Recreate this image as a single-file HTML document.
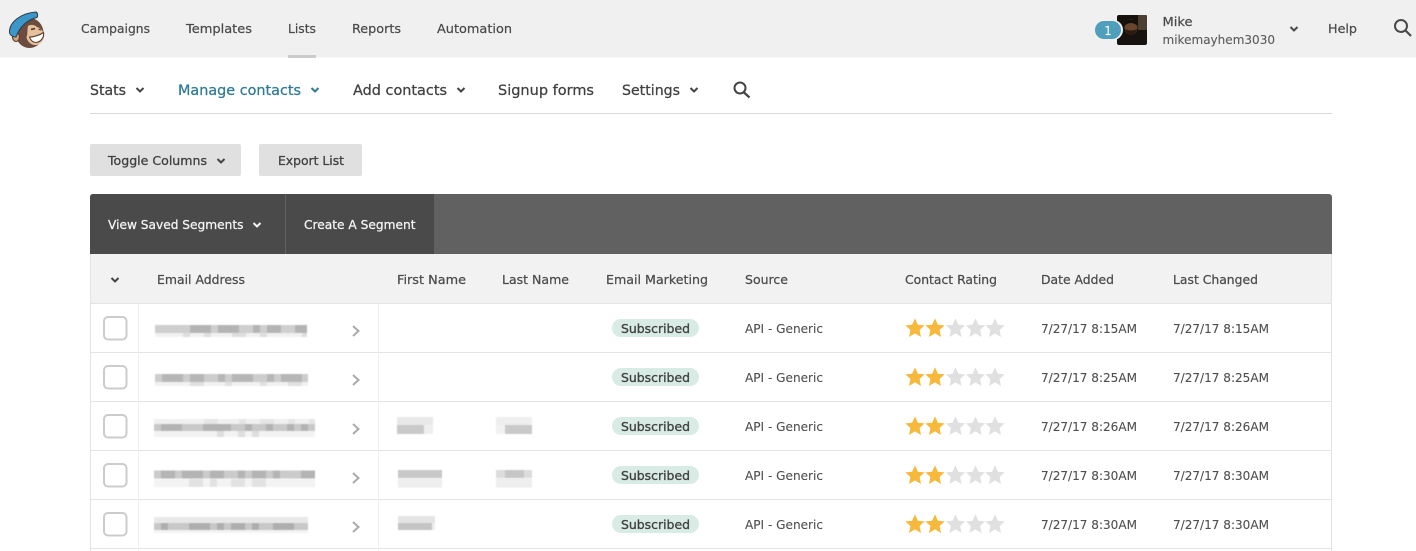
<!DOCTYPE html>
<html><head><meta charset="utf-8"><title>Lists</title>
<style>
html,body{margin:0;padding:0;background:#fff;width:1416px;height:551px;overflow:hidden}
svg{display:block}
text{font-family:"DejaVu Sans","Liberation Sans",sans-serif;fill:#4a4a4a}
.n{font-size:12.5px;fill:#4a4a4a;stroke:#4a4a4a;stroke-width:.22}
.s{font-size:14.5px;fill:#404040;stroke:#404040;stroke-width:.25}
.m{font-size:14.5px;fill:#2f7a94;stroke:#2f7a94;stroke-width:.25}
.b{font-size:12px;fill:#404040;stroke:#404040;stroke-width:.28}
.w{font-size:12px;fill:#f5f5f5;stroke:#f5f5f5;stroke-width:.25}
.h{font-size:12px;fill:#4a4a4a;stroke:#4a4a4a;stroke-width:.22}
.c{font-size:12px;fill:#4f4f4f;stroke:#4f4f4f;stroke-width:.1}
.p{font-size:12px;fill:#404040;stroke:#404040;stroke-width:.3}
.chev{fill:none;stroke-width:2;stroke-linecap:butt}
</style></head><body>
<svg xmlns="http://www.w3.org/2000/svg" width="1416" height="551" viewBox="0 0 1416 551">
<defs>
<filter id="soft" x="-5%" y="-5%" width="110%" height="110%"><feGaussianBlur stdDeviation="0.6"/></filter>
<path id="ch" class="chev" d="M-3.500 -2L0 1.500L3.500 -2"/>
<path id="st" d="M0 -9.6L2.9 -3.2L9.6 -2.6L4.6 2L6 9L0 5.4L-6 9L-4.6 2L-9.6 -2.6L-2.9 -3.2Z"/>
<g id="row">
<rect x="104" y="317" width="22.500" height="22.500" rx="4" fill="#fff" stroke="#ccc" stroke-width="2"/>
<path d="M353 326L358.500 331L353 336" fill="none" stroke="#aaa" stroke-width="2"/>
<rect x="612" y="319" width="87" height="18" rx="9" fill="#d8ebe4"/>
<use href="#st" x="915" y="328" fill="#f6b93b"/><use href="#st" x="935" y="328" fill="#f6b93b"/><use href="#st" x="955.500" y="328" fill="#e0e0e0"/><use href="#st" x="975.500" y="328" fill="#e0e0e0"/><use href="#st" x="995" y="328" fill="#e0e0e0"/>
</g>
</defs>

<!-- top bar -->
<rect width="1416" height="57.500" fill="#f0f0f0"/>
<rect x="288" y="55" width="28" height="3" fill="#ccc"/>

<!-- logo -->
<g>
<ellipse cx="29.500" cy="33" rx="14" ry="15" fill="#6b4c3e"/>
<ellipse cx="16" cy="37" rx="3.500" ry="4.500" fill="#d3a47a" stroke="#5c4034" stroke-width="1.200"/>
<path d="M9.500 31C10 22 21 13 36 12C38 13 38 16 37 17.500C28 19.500 20 26 16 37C12 37 9 34.500 9.500 31Z" fill="#3b97c9" stroke="#2f3a44" stroke-width="1"/>
<path d="M28 26C31 24 35 25 37 27C41 28 44.500 32 44 37C43.500 42 39 45.500 34 45C30 44 27 41 26.500 37C28 34 27 30 28 26Z" fill="#e6c29c"/>
<path d="M29.500 37C34 37 40 35 43.500 32.500C44.500 37 41 42 36 42.500C32.500 42.500 30.500 40 29.500 37Z" fill="#fff" stroke="#5c3d30" stroke-width="1.100"/>
<path d="M31 29.500L35 28.500" stroke="#4a3228" stroke-width="1.500"/>
<path d="M38.500 29L41 30" stroke="#4a3228" stroke-width="1.200"/>
</g>

<text class="n" x="81" y="33" textLength="69" lengthAdjust="spacingAndGlyphs">Campaigns</text>
<text class="n" x="186" y="33" textLength="66" lengthAdjust="spacingAndGlyphs">Templates</text>
<text class="n" x="288" y="33" textLength="28" lengthAdjust="spacingAndGlyphs">Lists</text>
<text class="n" x="352" y="33" textLength="49" lengthAdjust="spacingAndGlyphs">Reports</text>
<text class="n" x="437" y="33" textLength="75" lengthAdjust="spacingAndGlyphs">Automation</text>

<!-- avatar & badge -->
<rect x="1117" y="15" width="30" height="30" rx="2" fill="#17120e"/>
<rect x="1138" y="15" width="9" height="15" rx="1" fill="#4a3f30"/>
<ellipse cx="1131" cy="27" rx="6.500" ry="8" fill="#6a452c"/>
<path d="M1125 29C1127 37 1135 37 1137 29C1134 31 1128 31 1125 29Z" fill="#2a1a10"/>
<path d="M1124.500 26C1124 17 1138 17 1137.500 26C1134 22 1128 22 1124.500 26Z" fill="#15100c"/>
<rect x="1095" y="20" width="28" height="20" rx="10" fill="#f0f0f0"/>
<rect x="1095" y="21" width="26" height="18" rx="9" fill="#4f9ebb"/>
<text x="1104.500" y="35" style="font-size:12px;fill:#f2f7f9;stroke:#f2f7f9;stroke-width:.25" textLength="7" lengthAdjust="spacingAndGlyphs">1</text>

<text class="n" x="1162.500" y="26" textLength="30" lengthAdjust="spacingAndGlyphs">Mike</text>
<text class="n" x="1162.500" y="44" textLength="112.500" lengthAdjust="spacingAndGlyphs" style="fill:#5c5c5c;stroke-width:.1">mikemayhem3030</text>
<use href="#ch" x="1294" y="29" stroke="#4a4a4a"/>
<text class="n" x="1328" y="33" textLength="29" lengthAdjust="spacingAndGlyphs">Help</text>
<circle cx="1401" cy="26" r="6" fill="none" stroke="#4a4a4a" stroke-width="2"/>
<path d="M1405.500 30.500L1411 36" stroke="#4a4a4a" stroke-width="2.200"/>

<!-- sub nav -->
<text class="s" x="90" y="95" textLength="36" lengthAdjust="spacingAndGlyphs">Stats</text>
<use href="#ch" x="140" y="90" stroke="#444"/>
<text class="m" x="178" y="95" textLength="123" lengthAdjust="spacingAndGlyphs">Manage contacts</text>
<use href="#ch" x="315" y="90" stroke="#2f7a94"/>
<text class="s" x="353" y="95" textLength="94" lengthAdjust="spacingAndGlyphs">Add contacts</text>
<use href="#ch" x="461" y="90" stroke="#444"/>
<text class="s" x="498" y="95" textLength="96" lengthAdjust="spacingAndGlyphs">Signup forms</text>
<text class="s" x="622" y="95" textLength="58" lengthAdjust="spacingAndGlyphs">Settings</text>
<use href="#ch" x="694" y="90" stroke="#444"/>
<circle cx="740" cy="88" r="5.500" fill="none" stroke="#444" stroke-width="2"/>
<path d="M744 92.500L749.500 97.500" stroke="#444" stroke-width="2.200"/>
<rect x="90" y="113" width="1242" height="1" fill="#d9d9d9"/>

<!-- buttons -->
<rect x="90" y="144" width="151" height="32" rx="2" fill="#e0e0e0"/>
<text class="b" x="108" y="165" textLength="99" lengthAdjust="spacingAndGlyphs">Toggle Columns</text>
<use href="#ch" x="221" y="161" stroke="#444"/>
<rect x="259" y="144" width="103" height="32" rx="2" fill="#e0e0e0"/>
<text class="b" x="278" y="165" textLength="66" lengthAdjust="spacingAndGlyphs">Export List</text>

<!-- segments bar -->
<path d="M90 197a3 3 0 0 1 3-3H1329a3 3 0 0 1 3 3V254H90Z" fill="#616161"/>
<path d="M90 197a3 3 0 0 1 3-3H434V254H90Z" fill="#4a4a4a"/>
<rect x="285" y="194" width="1" height="60" fill="#626262"/>
<text class="w" x="108" y="229" textLength="135.500" lengthAdjust="spacingAndGlyphs">View Saved Segments</text>
<use href="#ch" x="257" y="225" stroke="#f2f2f2"/>
<text class="w" x="304" y="229" textLength="111.500" lengthAdjust="spacingAndGlyphs">Create A Segment</text>

<!-- table -->
<rect x="90" y="254" width="1242" height="49" fill="#f2f2f2"/>
<g fill="#e3e3e3">
<rect x="90" y="254" width="1" height="297"/>
<rect x="1331" y="254" width="1" height="297"/>
<rect x="90" y="303" width="1242" height="1"/>
<rect x="90" y="352" width="1242" height="1"/>
<rect x="90" y="401" width="1242" height="1"/>
<rect x="90" y="450" width="1242" height="1"/>
<rect x="90" y="499" width="1242" height="1"/>
<rect x="90" y="548" width="1242" height="1"/>
</g>
<g fill="#efefef"><rect x="138" y="304" width="1" height="247"/><rect x="378" y="304" width="1" height="247"/></g>

<use href="#ch" x="115" y="280" stroke="#444"/>
<text class="h" x="157" y="284" textLength="88" lengthAdjust="spacingAndGlyphs">Email Address</text>
<text class="h" x="397" y="284" textLength="69" lengthAdjust="spacingAndGlyphs">First Name</text>
<text class="h" x="502" y="284" textLength="67" lengthAdjust="spacingAndGlyphs">Last Name</text>
<text class="h" x="606" y="284" textLength="102" lengthAdjust="spacingAndGlyphs">Email Marketing</text>
<text class="h" x="745" y="284" textLength="43" lengthAdjust="spacingAndGlyphs">Source</text>
<text class="h" x="905" y="284" textLength="92" lengthAdjust="spacingAndGlyphs">Contact Rating</text>
<text class="h" x="1041" y="284" textLength="73" lengthAdjust="spacingAndGlyphs">Date Added</text>
<text class="h" x="1173" y="284" textLength="85" lengthAdjust="spacingAndGlyphs">Last Changed</text>

<use href="#row"/><use href="#row" y="49"/><use href="#row" y="98"/><use href="#row" y="147"/><use href="#row" y="196"/>

<!-- row text -->
<g>
<text class="p" x="621" y="333" textLength="69" lengthAdjust="spacingAndGlyphs">Subscribed</text>
<text class="c" x="745" y="333" textLength="78" lengthAdjust="spacingAndGlyphs">API - Generic</text>
<text class="c" x="1041" y="333" textLength="96" lengthAdjust="spacingAndGlyphs">7/27/17 8:15AM</text>
<text class="c" x="1173" y="333" textLength="96" lengthAdjust="spacingAndGlyphs">7/27/17 8:15AM</text>
<text class="p" x="621" y="382" textLength="69" lengthAdjust="spacingAndGlyphs">Subscribed</text>
<text class="c" x="745" y="382" textLength="78" lengthAdjust="spacingAndGlyphs">API - Generic</text>
<text class="c" x="1041" y="382" textLength="96" lengthAdjust="spacingAndGlyphs">7/27/17 8:25AM</text>
<text class="c" x="1173" y="382" textLength="96" lengthAdjust="spacingAndGlyphs">7/27/17 8:25AM</text>
<text class="p" x="621" y="431" textLength="69" lengthAdjust="spacingAndGlyphs">Subscribed</text>
<text class="c" x="745" y="431" textLength="78" lengthAdjust="spacingAndGlyphs">API - Generic</text>
<text class="c" x="1041" y="431" textLength="96" lengthAdjust="spacingAndGlyphs">7/27/17 8:26AM</text>
<text class="c" x="1173" y="431" textLength="96" lengthAdjust="spacingAndGlyphs">7/27/17 8:26AM</text>
<text class="p" x="621" y="480" textLength="69" lengthAdjust="spacingAndGlyphs">Subscribed</text>
<text class="c" x="745" y="480" textLength="78" lengthAdjust="spacingAndGlyphs">API - Generic</text>
<text class="c" x="1041" y="480" textLength="96" lengthAdjust="spacingAndGlyphs">7/27/17 8:30AM</text>
<text class="c" x="1173" y="480" textLength="96" lengthAdjust="spacingAndGlyphs">7/27/17 8:30AM</text>
<text class="p" x="621" y="529" textLength="69" lengthAdjust="spacingAndGlyphs">Subscribed</text>
<text class="c" x="745" y="529" textLength="78" lengthAdjust="spacingAndGlyphs">API - Generic</text>
<text class="c" x="1041" y="529" textLength="96" lengthAdjust="spacingAndGlyphs">7/27/17 8:30AM</text>
<text class="c" x="1173" y="529" textLength="96" lengthAdjust="spacingAndGlyphs">7/27/17 8:30AM</text>
</g>

<!-- blurred emails -->
<g fill="none" filter="url(#soft)">
<!-- row 1 -->
<path d="M155 329H307" stroke="#cfcfcf" stroke-width="8"/>
<path d="M190 329H307" stroke="#b4b4b4" stroke-width="8" stroke-dasharray="21 7 21 14 7 7 14 14 14"/>
<path d="M155 335H307" stroke="#f1f1f1" stroke-width="4"/>
<path d="M183 335H307" stroke="#dedede" stroke-width="4" stroke-dasharray="7 14 7 21 14 14 7 35"/>
<!-- row 2 -->
<path d="M155 378H308" stroke="#cdcdcd" stroke-width="8"/>
<path d="M162 378H308" stroke="#b6b6b6" stroke-width="8" stroke-dasharray="21 7 14 14 7 7 21 14 7 7 21"/>
<path d="M155 384H308" stroke="#f1f1f1" stroke-width="4"/>
<path d="M190 384H308" stroke="#e0e0e0" stroke-width="4" stroke-dasharray="14 21 7 28 7 21"/>
<!-- row 3 -->
<path d="M154 421.500H315" stroke="#f0f0f0" stroke-width="5"/>
<path d="M204 421.500H315" stroke="#e5e5e5" stroke-width="5" stroke-dasharray="14 21 7 14 14 14 7"/>
<path d="M154 427.500H315" stroke="#c9c9c9" stroke-width="7"/>
<path d="M161 427.500H315" stroke="#b3b3b3" stroke-width="7" stroke-dasharray="21 21 28 14 7 14 7 14 7 7 7"/>
<path d="M154 434H315" stroke="#f3f3f3" stroke-width="6"/>
<path d="M217 434H260" stroke="#dedede" stroke-width="6" stroke-dasharray="7 14 7 7 7"/>
<!-- row 4 -->
<path d="M154 474.500H315" stroke="#cbcbcb" stroke-width="8"/>
<path d="M161 474.500H315" stroke="#b4b4b4" stroke-width="8" stroke-dasharray="14 7 21 7 14 14 7 7 14 7 7 21 14 7"/>
<path d="M154 483H315" stroke="#f3f3f3" stroke-width="8"/>
<path d="M189 483H266" stroke="#e2e2e2" stroke-width="8" stroke-dasharray="14 7 7 14 14 7 14"/>
<!-- row 5 -->
<path d="M154 520H308" stroke="#e8e8e8" stroke-width="6"/>
<path d="M154 526.500H308" stroke="#c8c8c8" stroke-width="7"/>
<path d="M161 526.500H301" stroke="#aeaeae" stroke-width="7" stroke-dasharray="7 21 21 7 7 7 14 7 7 14 21"/>
<path d="M154 531.500H308" stroke="#f3f3f3" stroke-width="3"/>

<!-- names -->
<path d="M397 421H433" stroke="#e8e8e8" stroke-width="8"/>
<path d="M397 429.500H433" stroke="#c9c9c9" stroke-width="9"/>
<path d="M424 429.500H433" stroke="#efefef" stroke-width="9"/>
<path d="M496 421H532" stroke="#eeeeee" stroke-width="8"/>
<path d="M505 429.500H532" stroke="#c9c9c9" stroke-width="9"/>
<path d="M496 429.500H505" stroke="#f2f2f2" stroke-width="9"/>
<path d="M398 474H442" stroke="#c8c8c8" stroke-width="8"/>
<path d="M398 483H442" stroke="#eeeeee" stroke-width="9"/>
<path d="M496 474H532" stroke="#dcdcdc" stroke-width="8"/>
<path d="M505 474H524" stroke="#c6c6c6" stroke-width="8"/>
<path d="M496 483H532" stroke="#eeeeee" stroke-width="9"/>
<path d="M398 519.500H435" stroke="#e4e4e4" stroke-width="7"/>
<path d="M398 526.500H432" stroke="#c4c4c4" stroke-width="7"/>
<path d="M432 526.500H435" stroke="#eeeeee" stroke-width="7"/>
</g>
</svg>
</body></html>
